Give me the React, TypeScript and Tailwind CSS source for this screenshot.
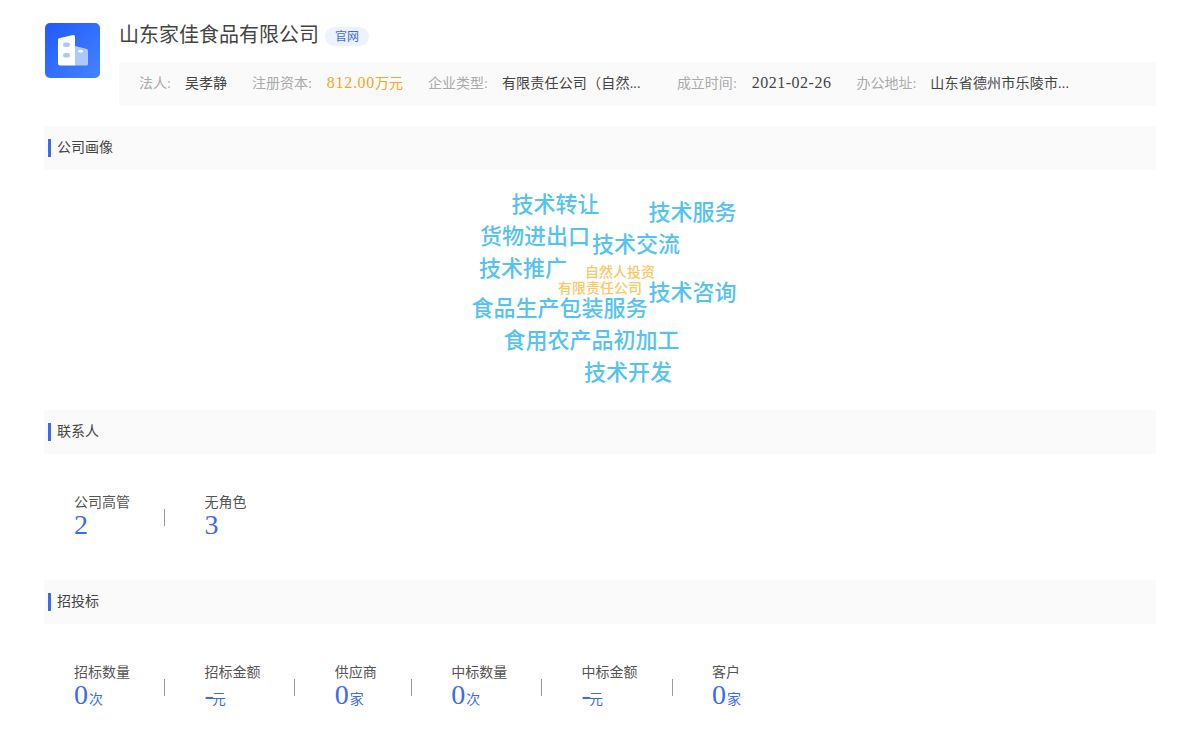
import React from "react";

const FONT = "font-['Liberation_Serif','Noto_Sans_CJK_SC',serif]";

const infoItems = [
  { label: "法人", value: "吴孝静" },
  { label: "注册资本", value: "812.00", unit: "万元", orange: true },
  { label: "企业类型", value: "有限责任公司（自然...", wide: true },
  { label: "成立时间", value: "2021-02-26", date: true },
  { label: "办公地址", value: "山东省德州市乐陵市...", long: true },
];

const words = [
  { text: "技术转让", cls: "left-[467.5px] top-[20px]" },
  { text: "技术服务", cls: "left-[604.5px] top-[28px]" },
  { text: "货物进出口", cls: "left-[436px] top-[52px]" },
  { text: "技术交流", cls: "left-[548px] top-[60px]" },
  { text: "技术推广", cls: "left-[435px] top-[84px]" },
  { text: "技术咨询", cls: "left-[604.5px] top-[108px]" },
  { text: "食品生产包装服务", cls: "left-[427.5px] top-[124px]" },
  { text: "食用农产品初加工", cls: "left-[459.5px] top-[156px]" },
  { text: "技术开发", cls: "left-[540px] top-[188px]" },
];

const SectionBar = ({ title }: { title: string }) => (
  <div className="flex h-[44px] items-center bg-[#fafafa] pl-[4px]">
    <span className="h-[18px] w-[3px] bg-[#3b6bec]" />
    <span className="mb-[2px] ml-[6px] text-[14px] text-[#444444]">{title}</span>
  </div>
);

type Stat = { label: string; value: string; unit?: string };

const StatRow = ({ stats }: { stats: Stat[] }) => (
  <div className="flex h-[126px] items-start pl-[30px] pt-[39px]">
    {stats.map((s, i) => (
      <div key={s.label} className="flex items-start">
        <div className="flex flex-col">
          <span className="text-[14px] leading-[20px] text-[#555555]">{s.label}</span>
          <span className="-mt-[2px] h-[28px] text-[28px] leading-[28px] text-[#3b6bec]">
            {s.value}
            {s.unit && (
              <span className={`text-[14px] ${s.value === "-" ? "-ml-[2px]" : "ml-px"}`}>{s.unit}</span>
            )}
          </span>
        </div>
        {i < stats.length - 1 && (
          <span className="ml-[34px] mr-[39.4px] mt-[16px] h-[17px] w-px bg-[#999999]" />
        )}
      </div>
    ))}
  </div>
);

const Logo = () => (
  <div className="flex h-[55px] w-[55px] shrink-0 items-center justify-center rounded-[5px] bg-gradient-to-br from-[#2457fb] to-[#4384ff]">
    <svg width="55" height="55" viewBox="0 0 55 55">
      <path d="M30 23 L42 26 Q43 26.500 43 27.500 V41 Q43 42.500 41.500 42.500 H30 Z" fill="#adc9fc" />
      <path d="M13 16.500 Q13 15.500 14 15.200 L28 12 Q30 11.800 30 13.500 V42.500 H15 Q13 42.500 13 40.500 Z" fill="#ffffff" />
      <rect x="18" y="19.500" width="7" height="4.500" rx="2.200" fill="#adc9fc" />
      <rect x="18" y="30" width="7" height="4.500" rx="2.200" fill="#adc9fc" />
      <rect x="33" y="27" width="5" height="2.500" rx="1.200" fill="#ffffff" />
    </svg>
  </div>
);

export default function App() {
  return (
    <div className={`${FONT} min-h-[752px] bg-white pl-[44px] pr-[44px] pt-[23px]`}>
      <div className="flex pl-px">
        <Logo />
        <div className="ml-[19px] min-w-0 flex-1">
          <div className="flex h-[24px] items-center">
            <h1 className="text-[20px] font-normal leading-[24px] text-[#444444]">山东家佳食品有限公司</h1>
            <span className="ml-[6px] mt-[3px] flex h-[19px] items-center rounded-full bg-[#edf2fd] px-[10px] text-[12px] text-[#3b6bec]">
              官网
            </span>
          </div>
          <div className="mt-[15px] flex h-[44px] items-center bg-[#fafafa] pb-[2px] pl-[20px]">
            {infoItems.map((it) => (
              <div key={it.label} className="mr-[25px] flex items-center whitespace-nowrap text-[14px]">
                <span className="text-[#aaaaaa]">{it.label}:</span>
                <span
                  className={`${it.orange || it.date ? "ml-[15px] text-[16px]" : "ml-[14px]"} ${
                    it.orange ? "tracking-[0.7px]" : it.date ? "tracking-[0.5px]" : ""
                  } ${it.wide ? "w-[150px] tracking-[0.2px]" : ""} ${it.long ? "tracking-[0.2px]" : ""} ${
                    it.orange ? "text-[#f5a623]" : "text-[#444444]"
                  }`}
                >
                  {it.value}
                  {it.unit && <span className="text-[14px] tracking-normal">{it.unit}</span>}
                </span>
              </div>
            ))}
          </div>
        </div>
      </div>

      <div className="mt-[20px]">
        <SectionBar title="公司画像" />
      </div>
      <div className="relative h-[240px] font-['Noto_Sans_CJK_SC',sans-serif]">
        {words.map((w) => (
          <span
            key={w.text}
            className={`absolute whitespace-nowrap text-[22px] font-medium leading-[24px] text-[#54c3f1] ${w.cls}`}
          >
            {w.text}
          </span>
        ))}
        <span className="absolute left-[541px] top-[93px] text-[14px] font-medium leading-[16px] text-[#fcc766]">自然人投资</span>
        <span className="absolute left-[514px] top-[109px] text-[14px] font-medium leading-[16px] text-[#fcc766]">有限责任公司</span>
      </div>

      <SectionBar title="联系人" />
      <StatRow
        stats={[
          { label: "公司高管", value: "2" },
          { label: "无角色", value: "3" },
        ]}
      />

      <SectionBar title="招投标" />
      <StatRow
        stats={[
          { label: "招标数量", value: "0", unit: "次" },
          { label: "招标金额", value: "-", unit: "元" },
          { label: "供应商", value: "0", unit: "家" },
          { label: "中标数量", value: "0", unit: "次" },
          { label: "中标金额", value: "-", unit: "元" },
          { label: "客户", value: "0", unit: "家" },
        ]}
      />
    </div>
  );
}
